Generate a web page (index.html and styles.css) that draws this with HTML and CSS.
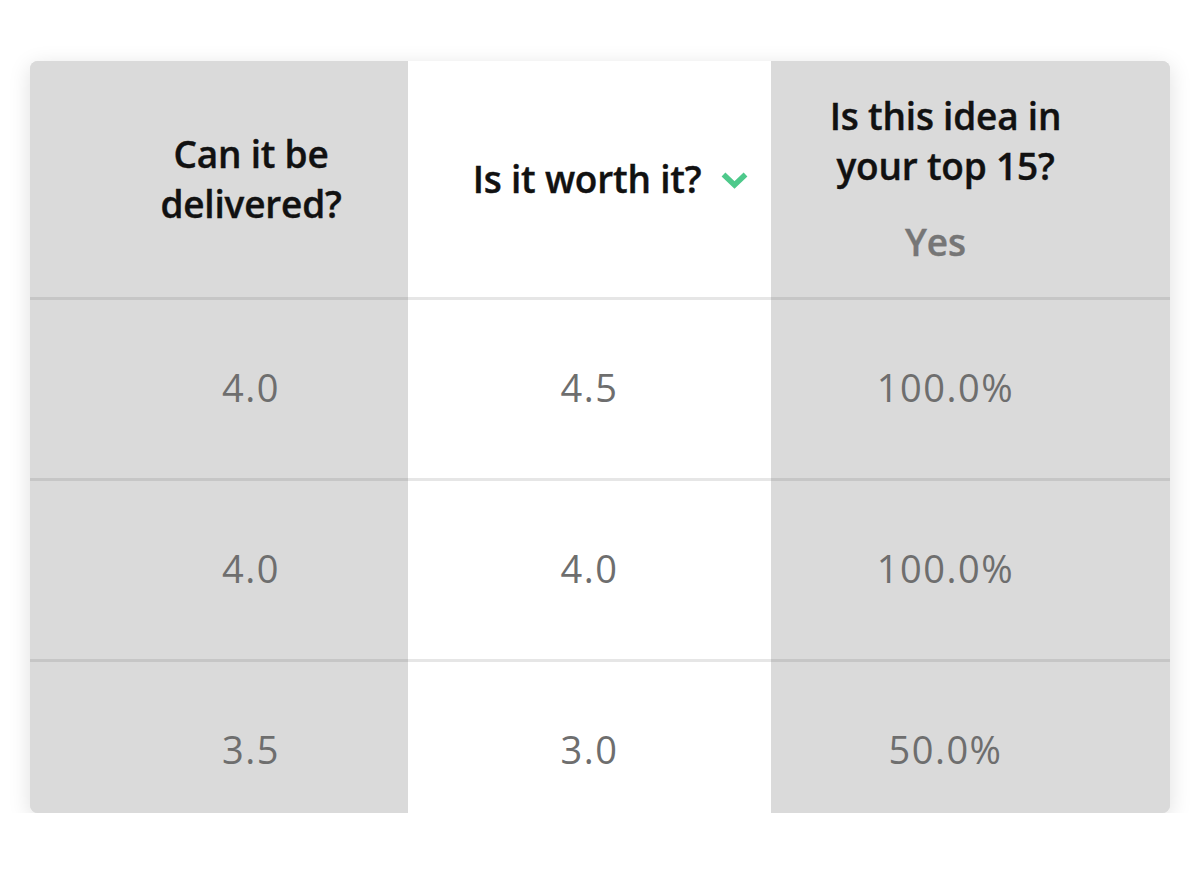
FILE: index.html
```html
<!DOCTYPE html>
<html lang="en">
<head>
<meta charset="utf-8">
<title>Idea scores</title>
<link rel="stylesheet" href="styles.css">
</head>
<body>
<div class="card">
  <div class="grid">
    <div class="cell head c1"><div class="title">Can it be<br>delivered?</div></div>
    <div class="cell head c2"><div class="title sort">Is it worth it?<svg class="chev" width="27" height="18" viewBox="0 0 27 18"><path d="M2.5 2.5 L13.5 13 L24.5 2.5" fill="none" stroke="#4ec98b" stroke-width="5.5"/></svg></div></div>
    <div class="cell head c3"><div class="stack"><div class="title">Is this idea in<br>your top 15?</div><div class="sub">Yes</div></div></div>

    <div class="cell row c1">4.0</div>
    <div class="cell row c2">4.5</div>
    <div class="cell row c3">100.0%</div>

    <div class="cell row c1">4.0</div>
    <div class="cell row c2">4.0</div>
    <div class="cell row c3">100.0%</div>

    <div class="cell row c1">3.5</div>
    <div class="cell row c2">3.0</div>
    <div class="cell row c3">50.0%</div>
  </div>
</div>
</body>
</html>
```
FILE: styles.css
```css
* { box-sizing: border-box; }
html, body { margin: 0; background: #ffffff; }
body {
  padding: 61px 30px 0;
  font-family: "Open Sans", "Liberation Sans", sans-serif;
}
.card {
  width: 1140px;
  height: 752px;
  border-radius: 8px;
  overflow: hidden;
  background: #dadada;
  box-shadow: 0 5px 22px rgba(0, 0, 0, 0.13);
}
.grid {
  display: grid;
  grid-template-columns: 378px 363px 399px;
}
.cell {
  display: flex;
  align-items: center;
  justify-content: center;
  text-align: center;
}
.c1 { background: #dadada; padding-left: 64px; }
.c2 { background: #ffffff; }
.c3 { background: #dadada; padding-right: 50px; }
.head {
  height: 236px;
  color: #111111;
}
.title {
  font-size: 37px;
  font-weight: 600;
  line-height: 50px;
  letter-spacing: -0.2px;
  -webkit-text-stroke: 0.4px #111111;
}
.sort {
  display: flex;
  align-items: center;
  margin-left: 42px;
}
.chev { margin-left: 20px; margin-top: 3px; }
.stack { display: flex; flex-direction: column; align-items: center; }
.sub {
  margin-top: 26px;
  font-size: 37px;
  font-weight: 600;
  line-height: 50px;
  color: #767676;
  -webkit-text-stroke: 0.4px #767676;
  margin-left: -20px;
}
.row {
  height: 181px;
  border-top: 3px solid #c6c6c6;
  font-size: 38px;
  font-weight: 400;
  letter-spacing: 1.5px;
  color: #6e6e6e;
  padding-bottom: 5px;
}
.row.c2 { border-top-color: #e6e6e6; }
```
